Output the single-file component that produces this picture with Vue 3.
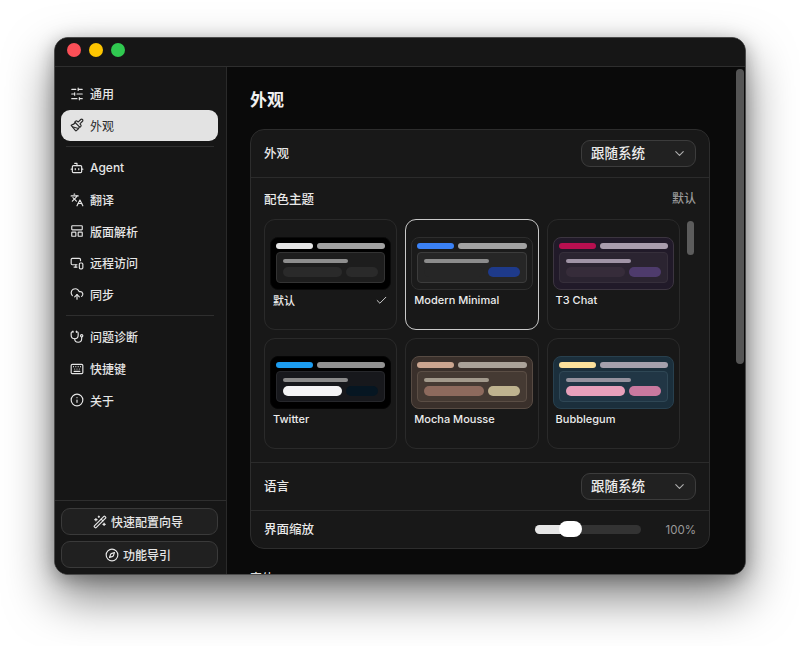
<script setup>
import { ref } from 'vue'

// 把矩形、圆转成 path，图标统一用一组 d 画
const rect = (x, y, w, h, r) =>
  `M${x + r} ${y}h${w - 2 * r}a${r} ${r} 0 0 1 ${r} ${r}v${h - 2 * r}a${r} ${r} 0 0 1-${r} ${r}h-${w - 2 * r}a${r} ${r} 0 0 1-${r}-${r}v-${h - 2 * r}a${r} ${r} 0 0 1 ${r}-${r}z`
const circ = (cx, cy, r) => `M${cx - r} ${cy}a${r} ${r} 0 1 0 ${2 * r} 0a${r} ${r} 0 1 0-${2 * r} 0z`

const icons = {
  sliders: ['M21 4h-7M10 4H3M21 12h-9M8 12H3M21 20h-5M12 20H3M14 2v4M8 10v4M16 18v4'],
  brush: [
    'm14.622 17.897-10.68-2.913',
    'M18.376 2.622a1 1 0 1 1 3.002 3.002L17.36 9.643a.5.5 0 0 0 0 .707l.944.944a2.41 2.41 0 0 1 0 3.408l-.944.944a.5.5 0 0 1-.707 0L8.354 7.348a.5.5 0 0 1 0-.707l.944-.944a2.41 2.41 0 0 1 3.408 0l.944.944a.5.5 0 0 0 .707 0z',
    'M9 8c-1.804 2.71-3.97 3.46-6.583 3.948a.507.507 0 0 0-.302.819l7.32 8.883a1 1 0 0 0 1.185.204C12.735 20.405 16 16.792 16 15'
  ],
  bot: ['M12 8V4H8', rect(4, 8, 16, 12, 2), 'M2 14h2M20 14h2M15 13v2M9 13v2'],
  languages: ['m5 8 6 6', 'm4 14 6-6 2-3', 'M2 5h12', 'M7 2h1', 'm22 22-5-10-5 10', 'M14 18h6'],
  layout: [rect(3, 3, 18, 7, 1), rect(3, 14, 7, 7, 1), rect(14, 14, 7, 7, 1)],
  devices: ['M18 8V6a2 2 0 0 0-2-2H4a2 2 0 0 0-2 2v7a2 2 0 0 0 2 2h8', 'M10 19v-3.96 3.15', 'M7 19h5', rect(16, 12, 6, 10, 2)],
  cloud: ['M12 13v8', 'M4 14.899A7 7 0 1 1 15.71 8h1.79a4.5 4.5 0 0 1 2.5 8.242', 'm8 17 4-4 4 4'],
  stethoscope: ['M11 2v2', 'M5 2v2', 'M5 3H4a2 2 0 0 0-2 2v4a6 6 0 0 0 12 0V5a2 2 0 0 0-2-2h-1', 'M8 15a6 6 0 0 0 12 0v-3', circ(20, 10, 2)],
  keyboard: ['M10 8h.01M12 12h.01M14 8h.01M16 12h.01M18 8h.01M6 8h.01M7 16h10M8 12h.01', rect(2, 4, 20, 16, 2)],
  info: [circ(12, 12, 10), 'M12 16v-4M12 8h.01'],
  wand: [
    'm21.64 3.64-1.28-1.28a1.21 1.21 0 0 0-1.72 0L2.36 18.64a1.21 1.21 0 0 0 0 1.72l1.28 1.28a1.2 1.2 0 0 0 1.72 0L21.64 5.36a1.2 1.2 0 0 0 0-1.72',
    'm14 7 3 3', 'M5 6v4', 'M19 14v4', 'M10 2v2', 'M7 8H3', 'M21 16h-4', 'M11 3H9'
  ],
  compass: [circ(12, 12, 10), 'm16.24 7.76-1.804 5.411a2 2 0 0 1-1.265 1.265L7.76 16.24l1.804-5.411a2 2 0 0 1 1.265-1.265z'],
  chevron: ['m6 9 6 6 6-6'],
  check: ['M20 6 9 17l-5-5']
}

// 侧边栏分组
const navGroups = [
  [
    { label: '通用', icon: 'sliders' },
    { label: '外观', icon: 'brush', active: true }
  ],
  [
    { label: 'Agent', icon: 'bot' },
    { label: '翻译', icon: 'languages' },
    { label: '版面解析', icon: 'layout' },
    { label: '远程访问', icon: 'devices' },
    { label: '同步', icon: 'cloud' }
  ],
  [
    { label: '问题诊断', icon: 'stethoscope' },
    { label: '快捷键', icon: 'keyboard' },
    { label: '关于', icon: 'info' }
  ]
]

// 主题预览配色
const themes = [
  { name: '默认', selected: true, c: { bg: '#000', edge: '#0a0a0a', inner: '#1d1d1d', innerEdge: '#333', p1: '#e6e6e6', p2: '#a2a2a2', line: '#8e8e8e', a: '#2a2a2a', b: '#2a2a2a' } },
  { name: 'Modern Minimal', focused: true, c: { bg: '#1b1b1b', edge: '#2e2e2e', inner: '#262626', innerEdge: '#3c3c3c', p1: '#3b82f6', p2: '#a3a3a3', line: '#8c8c8c', a: '#262626', b: '#1e3a8a' } },
  { name: 'T3 Chat', c: { bg: '#211a29', edge: '#3c3540', inner: '#2b2431', innerEdge: '#362f3b', p1: '#b80f50', p2: '#a99dad', line: '#a094a6', a: '#362c3a', b: '#4e3b6c' } },
  { name: 'Twitter', c: { bg: '#000', edge: '#050505', inner: '#17181c', innerEdge: '#26272b', p1: '#1c9cf0', p2: '#929292', line: '#8a8a8a', a: '#f4f4f5', b: '#061622' } },
  { name: 'Mocha Mousse', c: { bg: '#3a302b', edge: '#574b43', inner: '#453a33', innerEdge: '#5b4e45', p1: '#cba58f', p2: '#aaa299', line: '#a39a8c', a: '#8d6a5d', b: '#bfb38f' } },
  { name: 'Bubblegum', c: { bg: '#1b2f3c', edge: '#28404e', inner: '#213645', innerEdge: '#2f4755', p1: '#fbe09b', p2: '#a5a0ac', line: '#95929e', a: '#e8a0bb', b: '#c9799f' } }
]

const zoom = ref(100)
</script>

<template>
  <div class="page">
    <div class="window">
      <div class="titlebar">
        <span class="light red"></span>
        <span class="light yellow"></span>
        <span class="light green"></span>
      </div>

      <div class="body">
        <!-- 侧边栏 -->
        <aside class="sidebar">
          <nav class="nav">
            <template v-for="(group, i) in navGroups" :key="i">
              <div v-if="i > 0" class="nav-divider"></div>
              <div
                v-for="item in group"
                :key="item.label"
                class="nav-item"
                :class="{ active: item.active }"
              >
                <svg class="icon" viewBox="0 0 24 24">
                  <path v-for="d in icons[item.icon]" :key="d" :d="d" />
                </svg>
                <span>{{ item.label }}</span>
              </div>
            </template>
          </nav>
          <div class="side-footer">
            <button class="side-btn">
              <svg class="icon" viewBox="0 0 24 24">
                <path v-for="d in icons.wand" :key="d" :d="d" />
              </svg>
              快速配置向导
            </button>
            <button class="side-btn">
              <svg class="icon" viewBox="0 0 24 24">
                <path v-for="d in icons.compass" :key="d" :d="d" />
              </svg>
              功能导引
            </button>
          </div>
        </aside>

        <!-- 设置内容 -->
        <main class="content">
          <h1 class="page-title">外观</h1>

          <section class="panel">
            <div class="row row-select">
              <span class="row-label">外观</span>
              <div class="select">
                <span>跟随系统</span>
                <svg class="icon chevron" viewBox="0 0 24 24">
                  <path :d="icons.chevron[0]" />
                </svg>
              </div>
            </div>

            <div class="theme-section">
              <div class="theme-head">
                <span class="row-label">配色主题</span>
                <span class="theme-default">默认</span>
              </div>
              <div class="theme-grid">
                <div
                  v-for="t in themes"
                  :key="t.name"
                  class="theme-card"
                  :class="{ focused: t.focused }"
                >
                  <div class="preview" :style="{ background: t.c.bg, borderColor: t.c.edge }">
                    <div class="pv-top">
                      <i class="pill p-short" :style="{ background: t.c.p1 }"></i>
                      <i class="pill p-long" :style="{ background: t.c.p2 }"></i>
                    </div>
                    <div class="pv-inner" :style="{ background: t.c.inner, borderColor: t.c.innerEdge }">
                      <i class="pv-line" :style="{ background: t.c.line }"></i>
                      <div class="pv-btns">
                        <i class="btn-a" :style="{ background: t.c.a }"></i>
                        <i class="btn-b" :style="{ background: t.c.b }"></i>
                      </div>
                    </div>
                  </div>
                  <div class="theme-name">
                    <span>{{ t.name }}</span>
                    <svg v-if="t.selected" class="icon check" viewBox="0 0 24 24">
                      <path :d="icons.check[0]" />
                    </svg>
                  </div>
                </div>
                <div class="grid-scroll"></div>
              </div>
            </div>

            <div class="row row-select">
              <span class="row-label">语言</span>
              <div class="select">
                <span>跟随系统</span>
                <svg class="icon chevron" viewBox="0 0 24 24">
                  <path :d="icons.chevron[0]" />
                </svg>
              </div>
            </div>

            <div class="row row-zoom">
              <span class="row-label">界面缩放</span>
              <div class="zoom-ctl">
                <div class="track">
                  <div class="track-fill"></div>
                  <div class="thumb"></div>
                </div>
                <span class="zoom-val">{{ zoom }}%</span>
              </div>
            </div>
          </section>

          <div class="next-title">字体</div>
          <div class="page-scroll"></div>
        </main>
      </div>
    </div>
  </div>
</template>

<style>
html,
body {
  margin: 0;
  background: #fff;
}
</style>

<style scoped>
.page {
  box-sizing: border-box;
  width: 800px;
  height: 646px;
  padding: 37px 54px 71px;
  overflow: hidden;
  background: #fff;
  font-family: Inter, "Noto Sans CJK SC", sans-serif;
}

.window {
  display: flex;
  flex-direction: column;
  box-sizing: border-box;
  height: 538px;
  border: 1px solid #4b4b4b;
  border-radius: 14px;
  overflow: hidden;
  background: #0a0a0a;
  box-shadow: 0 22px 48px rgba(0, 0, 0, 0.5), 0 4px 18px rgba(0, 0, 0, 0.28);
}

.titlebar {
  flex: none;
  display: flex;
  align-items: center;
  gap: 8px;
  box-sizing: border-box;
  height: 29px;
  padding: 0 0 5px 12px;
  background: #161616;
  border-bottom: 1px solid #2e2e2e;
}

.light {
  width: 14px;
  height: 14px;
  border-radius: 50%;
}
.red { background: #fb4f57; }
.yellow { background: #fdc500; }
.green { background: #30c950; }

.body {
  flex: 1;
  display: flex;
  min-height: 0;
}

.sidebar {
  flex: none;
  display: flex;
  flex-direction: column;
  box-sizing: border-box;
  width: 172px;
  padding: 0 8px 0 6px;
  background: #161616;
  border-right: 1px solid #2a2a2a;
}

.nav {
  flex: 1;
  padding-top: 11px;
}

.nav-item {
  display: flex;
  align-items: center;
  gap: 6px;
  box-sizing: border-box;
  height: 31.6px;
  padding-left: 9px;
  border-radius: 9px;
  color: #e6e6e6;
  font-size: 12px;
  font-weight: 500;
}

.nav-item.active {
  background: #e3e3e3;
  color: #2a2a2a;
  font-weight: 400;
}

.nav-divider {
  height: 1px;
  margin: 5px 4px 5px 5px;
  background: #2e2e2e;
}

.icon {
  flex: none;
  width: 14px;
  height: 14px;
  fill: none;
  stroke: currentColor;
  stroke-width: 2;
  stroke-linecap: round;
  stroke-linejoin: round;
}

.side-footer {
  display: flex;
  flex-direction: column;
  gap: 6px;
  margin: 0 -8px 0 -6px;
  padding: 7px 8px 6px 6px;
  border-top: 1px solid #2e2e2e;
}

.side-btn {
  display: flex;
  align-items: center;
  justify-content: center;
  gap: 4px;
  height: 27px;
  padding: 0 3px 0 0;
  border: 1px solid #3a3a3a;
  border-radius: 9px;
  background: #202020;
  color: #e6e6e6;
  font-family: inherit;
  font-size: 12px;
  font-weight: 500;
}

.content {
  position: relative;
  flex: 1;
  min-width: 0;
  box-sizing: border-box;
  padding: 23px 35px 0 23px;
  overflow: hidden;
  background: #0a0a0a;
}

.page-title {
  margin: 0 0 19px;
  color: #f0f0f0;
  font-size: 17px;
  font-weight: 600;
  line-height: 20px;
}

.panel {
  box-sizing: border-box;
  border: 1px solid #2d2d2d;
  border-radius: 14px;
  background: #181818;
}

.row {
  display: flex;
  align-items: center;
  justify-content: space-between;
  padding: 0 13px;
}

.row-select {
  box-sizing: border-box;
  height: 48px;
  border-bottom: 1px solid #2b2b2b;
}

.row-zoom {
  height: 37px;
}

.row-label {
  color: #e8e8e8;
  font-size: 12.5px;
  font-weight: 500;
  line-height: 18px;
}

.select {
  display: flex;
  align-items: center;
  justify-content: space-between;
  box-sizing: border-box;
  width: 115px;
  height: 27px;
  padding: 0 8px 0 9px;
  border: 1px solid #3c3c3c;
  border-radius: 9px;
  background: #212121;
  color: #ececec;
  font-size: 13.5px;
  font-weight: 500;
  line-height: 18px;
}

.select span {
  margin-top: -2px;
}

.chevron {
  color: #b0b0b0;
  width: 15px;
  height: 15px;
  stroke-width: 1.7;
}

.theme-section {
  padding: 13px 13px 13px;
  border-bottom: 1px solid #2b2b2b;
}

.theme-head {
  display: flex;
  align-items: center;
  justify-content: space-between;
  height: 18px;
  margin-bottom: 10px;
}

.theme-default {
  margin-top: -2px;
  color: #9a9a9a;
  font-size: 12px;
  font-weight: 500;
  line-height: 18px;
}

.theme-grid {
  position: relative;
  display: grid;
  grid-template-columns: repeat(3, 133.3px);
  grid-auto-rows: 111px;
  gap: 8px;
}

.theme-card {
  box-sizing: border-box;
  padding: 17px 5px 0;
  border: 1px solid #2a2a2a;
  border-radius: 11px;
}

.theme-card.focused {
  border-color: #c9c9c9;
}

.preview {
  box-sizing: border-box;
  height: 53px;
  padding: 5px 5px 0;
  border: 1px solid transparent;
  border-radius: 8px;
}

.pv-top {
  display: flex;
  gap: 4px;
}

.pill {
  display: block;
  height: 6px;
  border-radius: 3px;
}

.p-short { width: 37px; }
.p-long { flex: 1; }

.pv-inner {
  box-sizing: border-box;
  height: 31px;
  margin-top: 3px;
  padding: 6px 6px 0;
  border: 1px solid transparent;
  border-radius: 4px;
}

.pv-line {
  display: block;
  width: 65px;
  height: 4px;
  border-radius: 2px;
}

.pv-btns {
  display: flex;
  gap: 4px;
  margin-top: 4px;
}

.btn-a,
.btn-b {
  display: block;
  height: 10px;
  border-radius: 5px;
}

.btn-a { width: 61px; }
.btn-b { width: 33px; }

.theme-name {
  display: flex;
  align-items: center;
  justify-content: space-between;
  height: 14px;
  margin-top: 3px;
  padding: 0 3px 0 3px;
  color: #ececec;
  font-size: 11px;
  font-weight: 500;
}

.check {
  width: 13px;
  height: 13px;
  color: #dcdcdc;
  stroke-width: 1.7;
}

.grid-scroll {
  position: absolute;
  top: 2px;
  left: 423px;
  width: 7px;
  height: 34px;
  border-radius: 4px;
  background: #5c5c5c;
}

.zoom-ctl {
  display: flex;
  align-items: center;
  gap: 25px;
}

.track {
  position: relative;
  width: 106px;
  height: 9px;
  border-radius: 5px;
  background: #333;
}

.track-fill {
  width: 35px;
  height: 100%;
  border-radius: 5px;
  background: #e6e6e6;
}

.thumb {
  position: absolute;
  top: -4px;
  left: 24px;
  width: 23px;
  height: 16px;
  border-radius: 8px;
  background: #fff;
}

.zoom-val {
  color: #9a9a9a;
  font-size: 11.5px;
}

.next-title {
  margin-top: 21px;
  color: #dcdcdc;
  font-size: 12px;
  font-weight: 500;
  line-height: 18px;
}

.page-scroll {
  position: absolute;
  top: 2px;
  right: 1px;
  width: 8px;
  height: 295px;
  border-radius: 4px;
  background: #555;
}
</style>
